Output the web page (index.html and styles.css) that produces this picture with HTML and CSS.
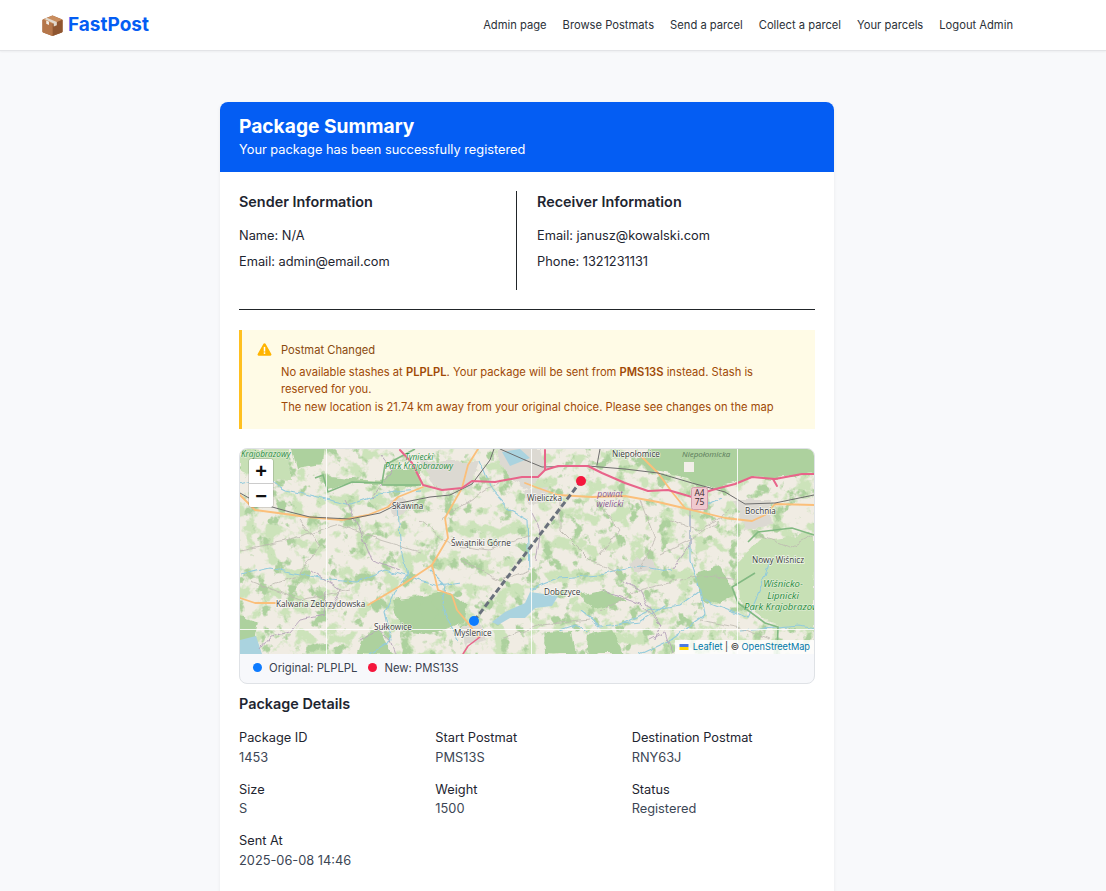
FILE: index.html
```html
<!DOCTYPE html>
<html lang="en">
<head>
<meta charset="utf-8">
<title>FastPost</title>
<link rel="stylesheet" href="styles.css">
</head>
<body>
<nav class="nav">
  <a class="brand">
    <svg class="brand-icon" viewBox="0 0 24 24" aria-hidden="true">
      <path fill="#a9683c" d="M12 1.500 21.800 5.500c.5.200.7.600.7 1v11.700c0 .5-.2.800-.7 1L12 23 2.200 19.200c-.5-.2-.7-.5-.7-1V6.500c0-.4.200-.8.700-1z"/>
      <path fill="#c98d5e" d="M12 1.500 22.300 6 12 10.500 1.700 6z"/>
      <path fill="#8f5631" d="M12 10.500 22.500 6v12.200c0 .5-.2.800-.7 1L12 23z"/>
      <path fill="#b5764a" d="M1.500 6 12 10.500V23l-9.800-3.800c-.5-.2-.7-.5-.7-1z"/>
      <path fill="#e2d8cc" d="m6 4 10.500 4.400v3.400l-3.200 1.200V9.800L3.600 5.200z"/>
      <path fill="#f4efe8" d="m5.500 6.800 2.800 1.200v3.500l-2.800-1.200z"/>
    </svg>
    <span>FastPost</span>
  </a>
  <div class="nav-links">
    <a>Admin page</a>
    <a>Browse Postmats</a>
    <a>Send a parcel</a>
    <a>Collect a parcel</a>
    <a>Your parcels</a>
    <a>Logout Admin</a>
  </div>
</nav>

<main class="card">
  <header class="card-head">
    <h1>Package Summary</h1>
    <p>Your package has been successfully registered</p>
  </header>
  <div class="card-body">
    <section class="parties">
      <div class="party party-left">
        <h2>Sender Information</h2>
        <p>Name: N/A</p>
        <p>Email: admin@email.com</p>
      </div>
      <div class="party party-right">
        <h2>Receiver Information</h2>
        <p>Email: janusz@kowalski.com</p>
        <p>Phone: 1321231131</p>
      </div>
    </section>

    <section class="alert">
      <svg class="alert-icon" viewBox="0 0 16 16" aria-hidden="true">
        <path fill="#ffb400" d="M8 1.200c.5 0 .9.300 1.100.7l6.200 11c.4.800-.1 1.700-1 1.700H1.700c-.9 0-1.400-.9-1-1.700l6.200-11c.2-.4.600-.7 1.100-.7z"/>
        <rect x="7.200" y="5.200" width="1.600" height="5" fill="#fff"/>
        <rect x="7.200" y="11" width="1.600" height="1.700" fill="#fff"/>
      </svg>
      <div class="alert-text">
        <h3>Postmat Changed</h3>
        <p>No available stashes at <b>PLPLPL</b>. Your package will be sent from <b>PMS13S</b> instead. Stash is reserved for you.</p>
        <p>The new location is 21.74 km away from your original choice. Please see changes on the map</p>
      </div>
    </section>

    <section class="map-box">
      <div class="map">
        <svg class="map-svg" viewBox="240 449 574 205" aria-label="Map">
          <defs>
            <filter id="patchLight" x="0" y="0" width="100%" height="100%" color-interpolation-filters="sRGB">
              <feTurbulence type="fractalNoise" baseFrequency=".065" numOctaves="4" seed="11"/>
              <feColorMatrix values="0 0 0 0 .80  0 0 0 0 .89  0 0 0 0 .73  8 0 0 0 -4.100"/>
            </filter>
            <filter id="patchDark" x="0" y="0" width="100%" height="100%" color-interpolation-filters="sRGB">
              <feTurbulence type="fractalNoise" baseFrequency=".07" numOctaves="4" seed="29"/>
              <feColorMatrix values="0 0 0 0 .68  0 0 0 0 .82  0 0 0 0 .62  9 0 0 0 -5.300"/>
            </filter>
            <filter id="wiggle" x="-5%" y="-5%" width="110%" height="110%">
              <feTurbulence type="fractalNoise" baseFrequency=".07" numOctaves="3" seed="5"/>
              <feDisplacementMap in="SourceGraphic" scale="9" xChannelSelector="R" yChannelSelector="G"/>
            </filter>
            <filter id="wiggleLine" x="-5%" y="-5%" width="110%" height="110%">
              <feTurbulence type="fractalNoise" baseFrequency=".09" numOctaves="2" seed="3"/>
              <feDisplacementMap in="SourceGraphic" scale="6" xChannelSelector="R" yChannelSelector="G"/>
            </filter>
          </defs>
          <rect x="240" y="449" width="574" height="205" fill="#f0ece3"/>
          <g class="soft">
            <rect x="240" y="449" width="574" height="205" filter="url(#patchLight)"/>
            <rect x="240" y="449" width="574" height="205" filter="url(#patchDark)"/>
            <g fill="#add19e" filter="url(#wiggle)">
              <path d="M635 462 651 445H820V473L775 478 752 476 735 483 700 489 688 477 655 470z"/>
              <path d="M292 445H324L322 464 298 468z"/>
              <path d="M318 478 328 490 352 482 382 485 421 487 421 468 392 468 382 480 350 478 328 476z"/>
              <path d="M392 600 450 592 466 606 462 622 430 636 404 632 396 616z"/>
              <path d="M360 640 378 628 392 654H356z"/>
              <path d="M578 596 606 590 626 602 596 610z"/>
              <path d="M698 572 720 566 734 590 718 606 698 596z"/>
              <path d="M588 636 612 630 624 654H586z"/>
              <path d="M545 632 572 630 576 654H546z"/>
              <path d="M240 616 258 622 254 640 240 642z"/>
              <path d="M418 606 432 598 440 616 424 624z"/>
            </g>
            <g fill="#c7e0b5" filter="url(#wiggle)">
              <path d="M735 566 760 540 814 532V630L780 628 752 610 738 598z"/>
              <path d="M240 449H290V480L262 484 240 470z"/>
            </g>
            <rect x="684" y="462" width="10" height="10" fill="#f2efe9"/>
            <g fill="#dcd9d2" filter="url(#wiggle)">
              <path d="M498 449 540 449 545 470 530 490 510 480 498 462z"/>
              <path d="M388 500 402 497 408 512 392 518z"/>
              <path d="M735 500 770 500 772 525 745 530z"/>
              <path d="M462 625 480 622 486 640 466 645z"/>
              <path d="M628 562 652 556 655 570 635 572z"/>
              <path d="M525 490 548 488 545 502 528 505z"/>
              <path d="M420 462 480 462 470 490 440 490z"/>
            </g>
            <g fill="#aad3df">
              <path d="M492 622 505 612 525 603 530 592 558 596 552 606 535 608 525 618 510 618 498 625z"/>
              <path d="M240 640 256 636 262 654H240z"/>
              <path d="M502 452 520 449 530 458 510 466z"/>
            </g>
            <g fill="none" stroke="#93cbdc" stroke-width="1.100" filter="url(#wiggleLine)">
              <path d="M240 484 262 478 285 490 305 494 330 500 350 505 375 496 396 492 420 490"/>
              <path d="M398 505 400 540 408 575 395 590 385 612 392 640 370 654"/>
              <path d="M480 460 492 490 510 510 528 520 530 570"/>
              <path d="M240 575 270 568 300 574 330 580 356 582 385 570 420 580 440 585 460 582"/>
              <path d="M530 590 560 578 600 575 640 566 672 572"/>
              <path d="M690 515 690 560 700 590 704 615 670 640 640 654"/>
              <path d="M704 600 730 610 748 618 760 590 770 560"/>
              <path d="M700 590 680 605 650 610 620 625"/>
              <path d="M740 630 800 625 814 628"/>
              <path d="M700 510 712 502 722 498"/>
              <path d="M430 570 445 585 442 605 450 625 458 640"/>
              <path d="M580 610 600 626 640 622 665 605"/>
              <path d="M560 630 575 625 590 632"/>
            </g>
            <g fill="none" stroke="#b5a3ba" stroke-width=".9" filter="url(#wiggleLine)">
              <path d="M260 650 270 636 290 632 300 620 325 615 326 590"/>
              <path d="M345 500 360 530 372 560 400 570"/>
              <path d="M620 580 640 590 650 610 660 625 655 640"/>
              <path d="M600 590 640 604 660 625"/>
              <path d="M380 455 392 470 372 498"/>
              <path d="M360 640 378 630 390 640 395 654"/>
              <path d="M650 640 665 632 672 654"/>
              <path d="M690 510 690 545 672 570"/>
              <path d="M530 510 540 530 535 560"/>
              <path d="M310 570 340 590 330 610"/>
            </g>
            <g fill="none" stroke="#bdb9b0" stroke-width=".8" filter="url(#wiggleLine)">
              <path d="M560 500 560 530 590 560 620 575"/>
              <path d="M640 500 655 540 640 570"/>
              <path d="M720 520 690 540 660 555"/>
              <path d="M300 520 320 545 300 575 270 585"/>
              <path d="M420 520 450 545 490 550 530 535"/>
              <path d="M600 610 640 590 700 575 740 580"/>
              <path d="M340 525 380 540 420 552"/>
              <path d="M240 550 290 540 340 525"/>
              <path d="M500 640 540 625 590 620"/>
              <path d="M760 535 790 548 814 535"/>
              <path d="M500 480 470 500 440 520"/>
              <path d="M700 620 740 628 770 640"/>
              <path d="M460 560 500 580 530 570"/>
              <path d="M596 500 620 530 600 555"/>
              <path d="M250 580 300 600 350 590"/>
              <path d="M670 520 700 530 730 510"/>
            </g>
            <g fill="none" stroke="#82b982" stroke-width="1.600">
              <path d="M315 478 323 475 328 492 352 482 382 483 385 465 415 449"/>
              <path d="M382 485 421 485"/>
              <path d="M748 542 758 532 792 528 814 535"/>
              <path d="M755 573 732 587 738 603 765 623 778 627 777 654"/>
            </g>
            <g fill="none" stroke-linejoin="round" stroke-linecap="round">
              <g stroke="#fbbf7a" stroke-width="1.800">
                <path d="M240 495 255 510 278 513 307 517 342 520 368 515 388 507 398 497 423 487"/>
                <path d="M478 449 468 465 462 488 445 518 448 538 432 565 438 590 452 595 457 610 468 623 478 637"/>
                <path d="M432 565 405 583 368 605"/>
                <path d="M240 598 255 603 275 603"/>
                <path d="M525 483 538 488 558 495 592 497 625 496 658 502 692 510 725 518 752 521 765 515 775 504 814 505"/>
                <path d="M642 457 658 473 672 492 685 508"/>
              </g>
              <g stroke="#6d6d6d" stroke-width="1">
                <path d="M240 493 258 503 290 512 310 517 350 519 380 513 400 503 430 497 450 495 460 490 472 484 490 460 494 449"/>
                <path d="M525 460 542 467 588 466 625 469 658 473 692 483 725 492 745 504 775 503 814 495"/>
                <path d="M600 449 597 465"/>
                <path d="M500 449 525 460"/>
              </g>
              <g stroke="#e8648a" stroke-width="2">
                <path d="M400 450 412 463 423 485 442 490 462 488 472 481 495 482 522 477 538 477 545 470 558 466 588 466 602 473 625 483 648 491 668 490 692 497 712 490 735 484 752 477 775 479 802 474 814 474"/>
                <path d="M545 450 545 470"/>
                <path d="M773 479 777 486"/>
                <path d="M463 654 468 646 480 637" stroke-width="1.500"/>
              </g>
            </g>
          </g>
          <path class="seam" d="M326.500 449V654M531.500 449V654M737.500 449V654M240 629.500H814"/>
          <g>
            <text x="392" y="509" class="city">Skawina</text>
            <text x="451" y="546" class="city">Świątniki Górne</text>
            <text x="276" y="607" class="city">Kalwaria Zebrzydowska</text>
            <text x="374" y="630" class="city">Sułkowice</text>
            <text x="454" y="636" class="city">Myślenice</text>
            <text x="544" y="595" class="city">Dobczyce</text>
            <text x="527" y="501" class="city">Wieliczka</text>
            <text x="612" y="457" class="city">Niepołomice</text>
            <text x="745" y="514" class="city">Bochnia</text>
            <text x="752" y="563" class="city">Nowy Wiśnicz</text>
            <text x="682" y="457" class="forest-dim">Niepołomicka</text>
            <text x="241" y="457" class="park">Krajobrazowy</text>
            <text x="419" y="460" class="park" text-anchor="middle">Tyniecki</text>
            <text x="419" y="469" class="park" text-anchor="middle">Park Krajobrazowy</text>
            <text x="783" y="587" class="park-lg" text-anchor="middle">Wiśnicko-</text>
            <text x="783" y="599" class="park-lg" text-anchor="middle">Lipnicki</text>
            <text x="744" y="610" class="park-lg">Park Krajobrazowy</text>
            <text x="610" y="497" class="powiat" text-anchor="middle">powiat</text>
            <text x="610" y="507" class="powiat" text-anchor="middle">wielicki</text>
          </g>
          <g>
            <rect x="691.500" y="487.500" width="16" height="22" rx="2" fill="#f0c9d0" stroke="#d79fac"/>
            <text x="699.500" y="496" class="shield" text-anchor="middle">A4</text>
            <text x="699.500" y="505" class="shield" text-anchor="middle">75</text>
          </g>
          <path class="route" d="M474 621 581 481"/>
          <circle cx="474" cy="621" r="5" fill="#0d7bff"/>
          <circle cx="581" cy="481" r="5" fill="#f5163c"/>
        </svg>
        <div class="zoom">
          <button class="zoom-btn">+</button>
          <button class="zoom-btn">−</button>
        </div>
        <div class="attrib">
          <svg class="flag" viewBox="0 0 12 8" aria-hidden="true"><rect width="12" height="4" fill="#4c7be1"/><rect y="4" width="12" height="4" fill="#ffd500"/></svg>
          <a>Leaflet</a> <span>|</span> © <a>OpenStreetMap</a>
        </div>
      </div>
      <div class="legend">
        <span class="legend-item"><i class="dot dot-blue"></i>Original: PLPLPL</span>
        <span class="legend-item"><i class="dot dot-red"></i>New: PMS13S</span>
      </div>
    </section>

    <section class="details">
      <h2>Package Details</h2>
      <div class="detail-grid">
        <div class="detail"><div class="k">Package ID</div><div class="v">1453</div></div>
        <div class="detail"><div class="k">Start Postmat</div><div class="v">PMS13S</div></div>
        <div class="detail"><div class="k">Destination Postmat</div><div class="v">RNY63J</div></div>
        <div class="detail"><div class="k">Size</div><div class="v">S</div></div>
        <div class="detail"><div class="k">Weight</div><div class="v">1500</div></div>
        <div class="detail"><div class="k">Status</div><div class="v">Registered</div></div>
        <div class="detail"><div class="k">Sent At</div><div class="v">2025-06-08 14:46</div></div>
      </div>
    </section>
  </div>
</main>
</body>
</html>
```
FILE: styles.css
```css
* { box-sizing: border-box; }
html, body { margin: 0; height: 891px; overflow: hidden; }
body {
  background: #f8f9fb;
  font-family: Inter, "Liberation Sans", sans-serif;
  color: #1e2530;
}
.nav {
  height: 51px;
  background: #fff;
  border-bottom: 1px solid #e3e4e7;
  box-shadow: 0 1px 2px rgba(0,0,0,.05);
  display: flex;
  align-items: center;
  justify-content: space-between;
  padding: 0 93px 0 41px;
}
.brand {
  display: flex;
  align-items: center;
  gap: 4px;
  color: #045df3;
  font-size: 19px;
  font-weight: 700;
  line-height: 24px;
}
.brand-icon { width: 23px; height: 23px; }
.nav-links {
  display: flex;
  gap: 16px;
  font-size: 11.200px;
  color: #2b3138;
}
.card {
  width: 614px;
  margin: 51px 0 0 220px;
  background: #fff;
  border-radius: 8px 8px 0 0;
  box-shadow: 0 1px 4px rgba(0,0,0,.06);
}
.card-head {
  height: 70px;
  padding: 12px 19px 0;
  background: #045df3;
  color: #fff;
  border-radius: 8px 8px 0 0;
}
.card-head h1 {
  margin: 0;
  font-size: 19.200px;
  line-height: 24px;
  font-weight: 700;
}
.card-head p {
  margin: 3px 0 0;
  font-size: 12.800px;
  line-height: 17px;
}
.card-body { padding: 19px 19px 40px; }
.parties {
  display: flex;
  padding-bottom: 19px;
  border-bottom: 1px solid #212529;
}
.party { height: 99px; padding-top: 1px; }
.party-left { flex: 0 0 278px; border-right: 1px solid #212529; }
.party-right { flex: 1; padding-left: 20px; }
.party h2, .details h2 {
  margin: 0 0 15px;
  font-size: 14.400px;
  line-height: 20px;
  font-weight: 600;
}
.party p {
  margin: 0 0 8px;
  font-size: 12.800px;
  line-height: 18px;
}
.alert {
  display: flex;
  margin-top: 20px;
  height: 99px;
  padding: 12px 20px 0 15px;
  gap: 9px;
  background: #fffbe6;
  border-left: 3px solid #ffc01f;
}
.alert-icon { width: 15px; height: 15px; flex: none; }
.alert-text { font-size: 11.200px; line-height: 16.800px; color: #a04a06; }
.alert-text h3 { margin: 0 0 6px; font-size: 11.200px; line-height: 16px; font-weight: 400; color: #8a4a10; }
.alert-text p { margin: 0 0 1.200px; }
.alert-text b { font-weight: 600; }
.map-box {
  margin-top: 19px;
  border: 1px solid #dfe2e6;
  border-radius: 8px;
  overflow: hidden;
  background: #f7f8fb;
}
.map { position: relative; height: 205px; }
.map-svg { display: block; width: 100%; height: 100%; }
.soft { filter: blur(.35px); }
.seam { stroke: #fff; stroke-width: 1; fill: none; opacity: .85; }
.route { stroke: #69707c; stroke-width: 3; stroke-dasharray: 6 3; fill: none; }
.city {
  font: 8.200px "Open Sans", "Noto Sans", sans-serif;
  fill: #3b3b3b;
  stroke: #fff;
  stroke-width: 1.500px;
  stroke-opacity: .7;
  paint-order: stroke;
}
.park {
  font: italic 8.200px "Open Sans", "Noto Sans", sans-serif;
  fill: #1f8a3a;
  stroke: #fff;
  stroke-width: 1px;
  stroke-opacity: .5;
  paint-order: stroke;
}
.park-lg {
  font: italic 9.500px "Open Sans", "Noto Sans", sans-serif;
  fill: #1f8a3a;
  stroke: #fff;
  stroke-width: 1px;
  stroke-opacity: .5;
  paint-order: stroke;
}
.forest-dim { font: italic 8px "Open Sans", "Noto Sans", sans-serif; fill: #5a7a5a; }
.powiat { font: italic 8.500px "Open Sans", "Noto Sans", sans-serif; fill: #8a5a94; }
.shield { font: 8.500px "Open Sans", "Noto Sans", sans-serif; fill: #3a2a2a; }
.zoom {
  position: absolute;
  top: 10px;
  left: 9px;
  width: 24px;
  display: flex;
  flex-direction: column;
  border-radius: 3px;
  background: #fff;
  box-shadow: 0 0 0 1px rgba(0,0,0,.12);
  overflow: hidden;
}
.zoom-btn {
  width: 24px;
  height: 24px;
  padding: 0;
  border: 0;
  background: #fff;
  color: #111;
  font: 700 20px/24px "Liberation Sans", sans-serif;
}
.zoom-btn + .zoom-btn { border-top: 1px solid #ccc; }
.attrib {
  position: absolute;
  right: 0;
  bottom: 0;
  height: 14px;
  padding: 0 4px;
  display: flex;
  align-items: center;
  gap: 2.500px;
  background: rgba(255,255,255,.82);
  font-size: 9.200px;
  line-height: 14px;
  color: #333;
}
.attrib a { color: #0078a8; }
.flag { width: 10px; height: 6px; margin-right: 1px; }
.legend {
  height: 29px;
  padding-bottom: 2px;
  display: flex;
  align-items: center;
  gap: 11px;
  padding-left: 13px;
  font-size: 11.300px;
  color: #3a4250;
}
.legend-item { display: flex; align-items: center; gap: 7px; }
.dot { width: 9px; height: 9px; border-radius: 50%; }
.dot-blue { background: #0d7bff; }
.dot-red { background: #f5163c; }
.details { margin-top: 10px; }
.detail-grid {
  display: grid;
  grid-template-columns: repeat(3, 1fr);
  column-gap: 13px;
  row-gap: 14px;
}
.k { font-size: 12.800px; line-height: 18px; }
.v { font-size: 12.800px; line-height: 18px; margin-top: 1.500px; color: #3c4655; }
```
